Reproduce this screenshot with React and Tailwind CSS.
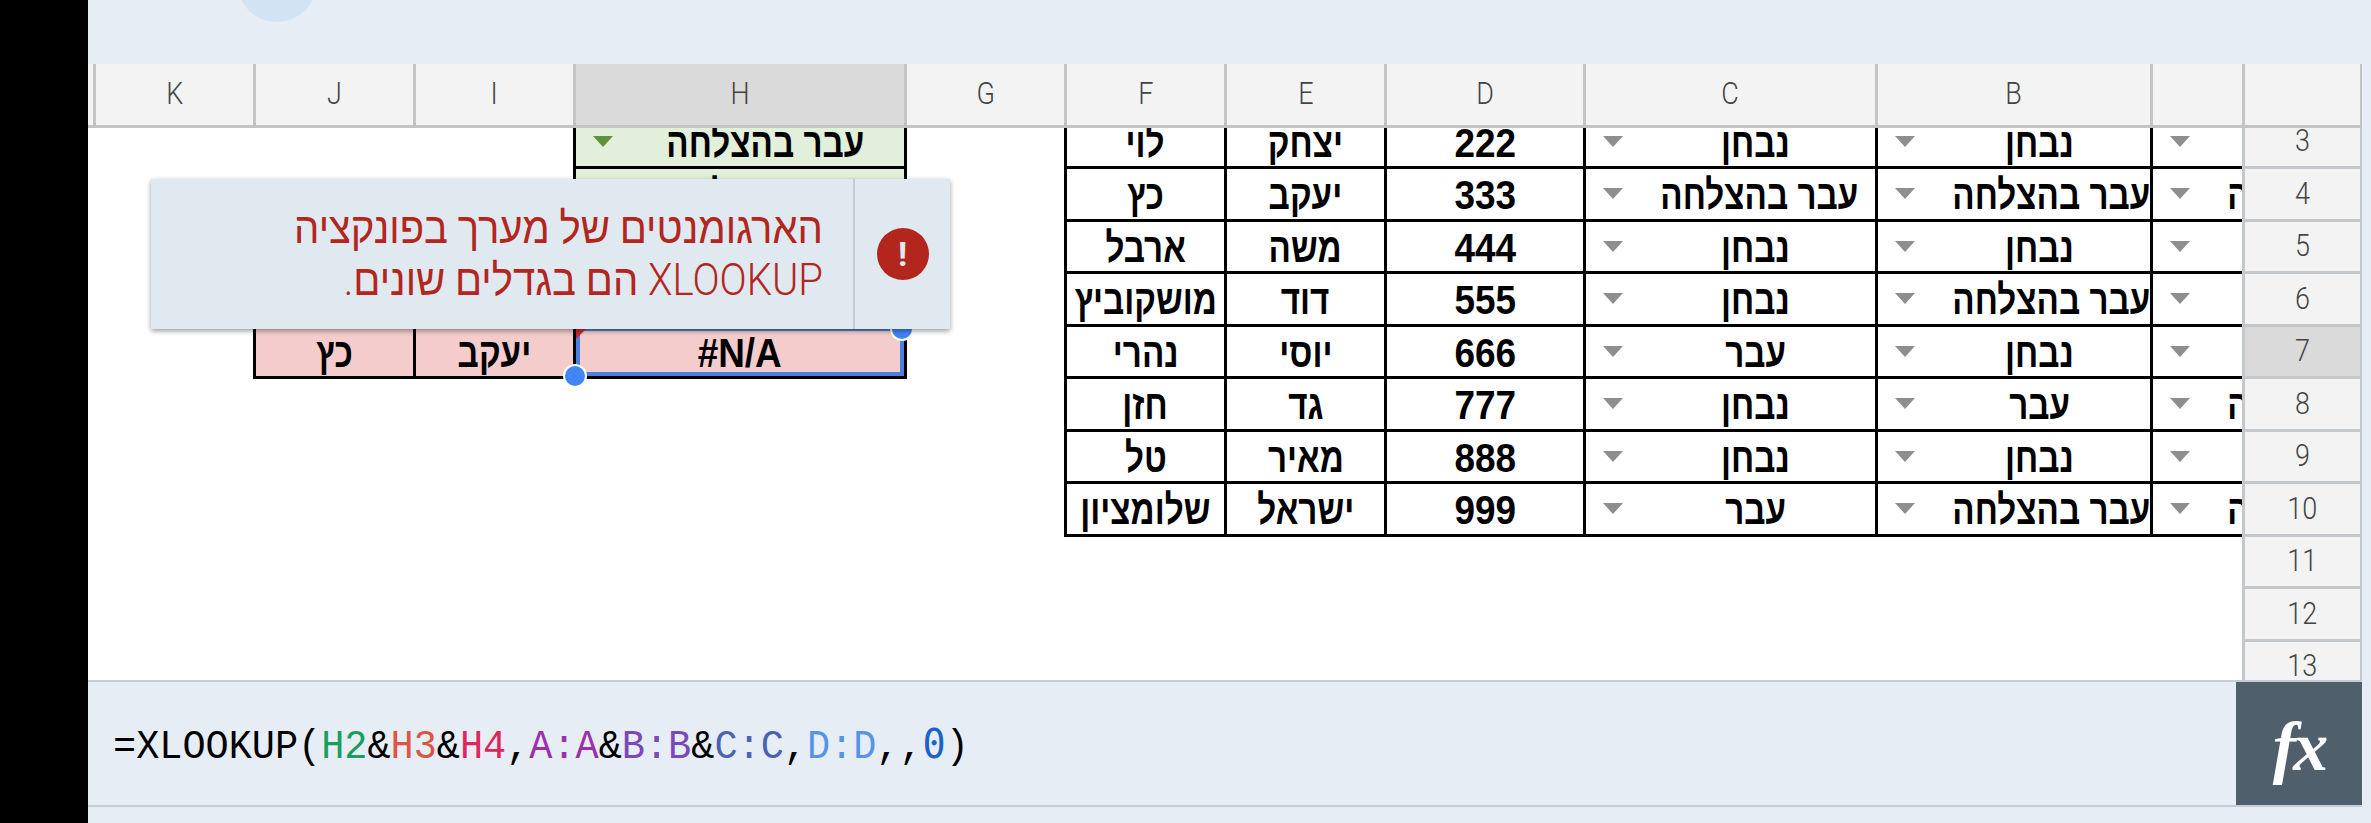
const COLS =
  "grid grid-cols-[5px_160px_160px_160px_331px_160px_160px_160px_199px_292px_275px_92px_120px]";

const PASS = "עבר בהצלחה";
const EXAM = "נבחן";
const MOVE = "עבר";

const letters = ["", "K", "J", "I", "H", "G", "F", "E", "D", "C", "B", "", ""];

// rows that scroll under the column header
const rows = [
  { n: 3, a: EXAM, b: EXAM, c: EXAM, d: "222", e: "יצחק", f: "לוי" },
  { n: 4, a: PASS, b: PASS, c: PASS, d: "333", e: "יעקב", f: "כץ" },
  { n: 5, a: EXAM, b: EXAM, c: EXAM, d: "444", e: "משה", f: "ארבל" },
  { n: 6, a: EXAM, b: PASS, c: EXAM, d: "555", e: "דוד", f: "מושקוביץ" },
  { n: 7, a: EXAM, b: EXAM, c: MOVE, d: "666", e: "יוסי", f: "נהרי" },
  { n: 8, a: PASS, b: MOVE, c: EXAM, d: "777", e: "גד", f: "חזן" },
  { n: 9, a: EXAM, b: EXAM, c: EXAM, d: "888", e: "מאיר", f: "טל" },
  { n: 10, a: PASS, b: PASS, c: MOVE, d: "999", e: "ישראל", f: "שלומציון" },
  { n: 11 },
  { n: 12 },
  { n: 13 },
];

const cellText = "font-['Liberation_Sans',sans-serif] font-bold text-[41px] leading-none text-black";
const tableCell = `flex items-center justify-center border-b-[3px] border-l-[3px] border-black pt-[4px] ${cellText}`;

// the reference's text runs taller and narrower than Liberation Sans
const Heb = ({ children }) => (
  <span className="inline-block scale-x-[0.81] whitespace-nowrap">{children}</span>
);
const Num = ({ children }) => (
  <span className="inline-block scale-x-[0.9] whitespace-nowrap">{children}</span>
);

const Tri = ({ green }) => (
  <div
    className={`ml-[17px] mr-[14px] h-0 w-0 shrink-0 border-x-[10px] border-t-[11px] border-x-transparent ${
      green ? "border-t-[#5f9239]" : "border-t-[#8e8e8e]"
    }`}
  />
);

const DropCell = ({ value, green, clip }) => (
  <div
    className={`flex items-center overflow-hidden border-b-[3px] border-l-[3px] border-black ${cellText} ${
      green ? "mr-[-3px] border-r-[3px] bg-[#e2efda]" : ""
    }`}
  >
    <div className={`flex items-center ${clip ? "w-[295px] shrink-0" : "w-full"}`}>
      <Tri green={green} />
      <span className="flex-1 whitespace-nowrap pt-[4px] text-center">
        <Heb>{value}</Heb>
      </span>
    </div>
  </div>
);

const SelectedCell = () => (
  <div className={`${tableCell} relative mr-[-3px] border-r-[3px] bg-[#f4cccc]`}>
    <Num>#N/A</Num>
    <div className="absolute inset-0 border-4 border-[#4a80e0]" />
    <div className="absolute left-0 top-0 h-0 w-0 border-r-[12px] border-t-[12px] border-r-transparent border-t-[#cc2a2a]" />
    <div className="absolute bottom-[-12px] left-[-13px] z-10 h-[24px] w-[24px] rounded-full border-2 border-white bg-[#4285f4]" />
    <div className="absolute right-[-10px] top-[-10px] z-10 h-[24px] w-[24px] rounded-full border-2 border-white bg-[#4285f4]" />
  </div>
);

const LeftColumns = ({ n }) => {
  const empty = <div />;
  if (n === 3 || n === 4 || n === 5 || n === 6) {
    return (
      <>
        {empty}
        {empty}
        {empty}
        {empty}
        <DropCell value={PASS} green />
        {empty}
      </>
    );
  }
  if (n === 7) {
    return (
      <>
        {empty}
        {empty}
        <div className={`${tableCell} bg-[#f4cccc]`}>
          <Heb>כץ</Heb>
        </div>
        <div className={`${tableCell} bg-[#f4cccc]`}>
          <Heb>יעקב</Heb>
        </div>
        <SelectedCell />
        {empty}
      </>
    );
  }
  return (
    <>
      {empty}
      {empty}
      {empty}
      {empty}
      {empty}
      {empty}
    </>
  );
};

const RowNumber = ({ n }) => (
  <div
    className={`flex items-center justify-center border-b-[3px] border-l-[3px] border-r-2 border-[#c4c8cc] font-['Roboto',sans-serif] text-[31px] font-light text-[#444] ${
      n === 7 ? "bg-[#dadada]" : "bg-[#f3f3f3]"
    }`}
  >
    <span className="inline-block scale-x-[0.87]">{n}</span>
  </div>
);

const Formula = () => (
  <div className="origin-left scale-x-[0.94] whitespace-pre font-['Liberation_Mono',monospace] text-[41px] leading-none text-black">
    =XLOOKUP(
    <span className="text-[#1a9e5f]">H2</span>&amp;
    <span className="text-[#dd5544]">H3</span>&amp;
    <span className="text-[#e0245e]">H4</span>,
    <span className="text-[#9c2fae]">A:A</span>&amp;
    <span className="text-[#7a48b8]">B:B</span>&amp;
    <span className="text-[#4a63b0]">C:C</span>,
    <span className="text-[#5594e6]">D:D</span>,,
    <span className="font-['DejaVu_Sans_Mono',monospace] text-[#1c62c8]">0</span>)
  </div>
);

const ErrorToast = () => (
  <div className="absolute left-[63px] top-[179px] z-20 flex h-[150px] w-[799px] bg-[#e0e9f0] shadow-[0_2px_5px_rgba(0,0,0,0.4)]">
    <div
      dir="rtl"
      className="flex-1 origin-right scale-x-[0.91] pr-[33px] pt-[23px] text-right font-['Roboto','Liberation_Sans',sans-serif] text-[44px] font-light leading-[52px] text-[#b3261e]"
    >
      הארגומנטים של מערך בפונקציה
      <br />
      XLOOKUP הם בגדלים שונים.
    </div>
    <div className="flex w-[97px] items-center justify-center border-l-2 border-[#c3ccd3]">
      <div className="flex h-[52px] w-[52px] items-center justify-center rounded-full bg-[#b3261e] font-['Roboto',sans-serif] text-[34px] font-bold text-[#e0e9f0]">
        !
      </div>
    </div>
  </div>
);

export default function App() {
  return (
    <div className="flex h-[823px] w-[2371px] overflow-hidden bg-black">
      <div className="w-[88px] shrink-0" />
      <div className="relative flex w-[2283px] flex-col bg-[#e6edf4]">
        {/* app bar, mostly scrolled off */}
        <div className="h-[64px] overflow-hidden">
          <div className="ml-[149px] mt-[-58px] h-[80px] w-[80px] rounded-full bg-[#d2e4f3]" />
        </div>

        {/* column letters */}
        <div className={`${COLS} h-[64px] font-['Roboto',sans-serif] text-[31px] font-light text-[#444]`}>
          {letters.map((l, i) => (
            <div
              key={i}
              className={`flex items-center justify-center border-b-[3px] border-[#c4c4c4] ${
                i > 0 ? "border-l-[3px]" : ""
              } ${i === 12 ? "border-r-2" : ""} ${l === "H" ? "bg-[#dadada]" : "bg-[#f3f3f3]"}`}
            >
              <span className="inline-block scale-x-[0.87]">{l}</span>
            </div>
          ))}
        </div>

        {/* sheet */}
        <div className="h-[552px] w-[2274px] overflow-hidden bg-white">
          <div className={`${COLS} mt-[-11.5px] auto-rows-[52.5px]`}>
            {rows.map((r) => (
              <div key={r.n} className="contents">
                <LeftColumns n={r.n} />
                {r.d ? (
                  <>
                    <div className={tableCell}>
                      <Heb>{r.f}</Heb>
                    </div>
                    <div className={tableCell}>
                      <Heb>{r.e}</Heb>
                    </div>
                    <div className={tableCell}>
                      <Num>{r.d}</Num>
                    </div>
                    <DropCell value={r.c} />
                    <DropCell value={r.b} />
                    <DropCell value={r.a} clip />
                  </>
                ) : (
                  <>
                    <div />
                    <div />
                    <div />
                    <div />
                    <div />
                    <div />
                  </>
                )}
                <RowNumber n={r.n} />
              </div>
            ))}
          </div>
        </div>

        {/* formula bar */}
        <div className="flex h-[127px] w-[2274px] items-center justify-between border-y-[2px] border-[#c5ccd3]">
          <div className="pl-[25px] pt-[4px]">
            <Formula />
          </div>
          <div className="flex h-full w-[126px] items-center justify-center bg-[#4f5f6b] pt-[6px] font-['Liberation_Serif',serif] text-[70px] font-bold italic tracking-[-3px] text-white">
            fx
          </div>
        </div>
        <div className="flex-1" />

        <ErrorToast />
      </div>
    </div>
  );
}
